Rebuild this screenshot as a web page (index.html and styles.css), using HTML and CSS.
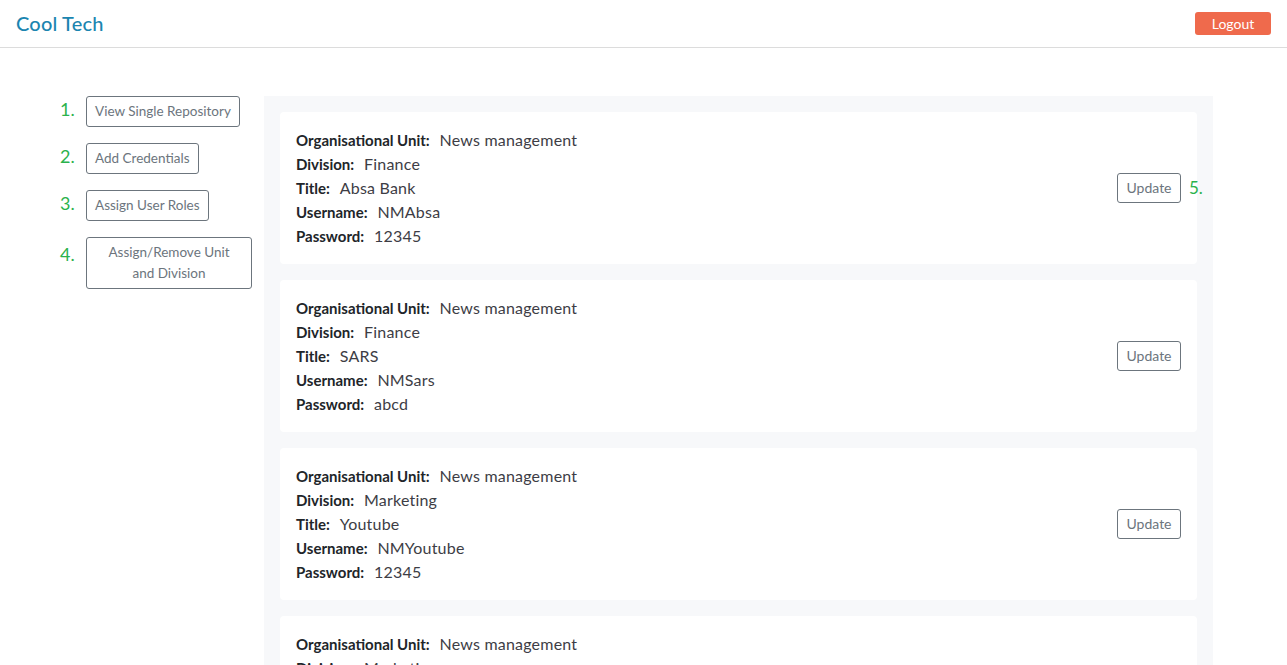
FILE: index.html
```html
<!DOCTYPE html>
<html>
<head>
<meta charset="utf-8">
<link rel="stylesheet" href="styles.css">
</head>
<body>
<header class="topbar">
  <div class="brand">Cool Tech</div>
  <button class="logout">Logout</button>
</header>
<main class="layout">
  <aside class="sidebar">
    <div class="step"><span class="num">1.</span><button class="outline">View Single Repository</button></div>
    <div class="step"><span class="num">2.</span><button class="outline">Add Credentials</button></div>
    <div class="step"><span class="num">3.</span><button class="outline">Assign User Roles</button></div>
    <div class="step step-tall"><span class="num">4.</span><button class="outline wide">Assign/Remove Unit<br>and Division</button></div>
  </aside>
  <section class="panel">
    <div class="card">
      <div class="fields">
        <div><b>Organisational Unit:</b> <span>News management</span></div>
        <div><b>Division:</b> <span>Finance</span></div>
        <div><b>Title:</b> <span>Absa Bank</span></div>
        <div><b>Username:</b> <span>NMAbsa</span></div>
        <div><b>Password:</b> <span>12345</span></div>
      </div>
      <button class="outline update">Update</button>
      <span class="num five">5.</span>
    </div>
    <div class="card">
      <div class="fields">
        <div><b>Organisational Unit:</b> <span>News management</span></div>
        <div><b>Division:</b> <span>Finance</span></div>
        <div><b>Title:</b> <span>SARS</span></div>
        <div><b>Username:</b> <span>NMSars</span></div>
        <div><b>Password:</b> <span>abcd</span></div>
      </div>
      <button class="outline update">Update</button>
    </div>
    <div class="card">
      <div class="fields">
        <div><b>Organisational Unit:</b> <span>News management</span></div>
        <div><b>Division:</b> <span>Marketing</span></div>
        <div><b>Title:</b> <span>Youtube</span></div>
        <div><b>Username:</b> <span>NMYoutube</span></div>
        <div><b>Password:</b> <span>12345</span></div>
      </div>
      <button class="outline update">Update</button>
    </div>
    <div class="card">
      <div class="fields">
        <div><b>Organisational Unit:</b> <span>News management</span></div>
        <div><b>Division:</b> <span>Marketing</span></div>
        <div><b>Title:</b> <span>Instagram</span></div>
        <div><b>Username:</b> <span>NMInsta</span></div>
        <div><b>Password:</b> <span>12345</span></div>
      </div>
      <button class="outline update">Update</button>
    </div>
  </section>
</main>
</body>
</html>
```
FILE: styles.css
```css
* { box-sizing: border-box; }
html, body { margin: 0; padding: 0; }
body {
  font-family: "Lato", "Liberation Sans", sans-serif;
  color: #212529;
  background: #fff;
  overflow: hidden;
  height: 665px;
}
.topbar {
  height: 48px;
  border-bottom: 1px solid #dcdcdc;
  display: flex;
  align-items: center;
  justify-content: space-between;
  padding: 0 16px;
}
.brand {
  color: #1b85b0;
  font-size: 20px;
  font-weight: 500;
  letter-spacing: 0.2px;
  margin-top: -2px;
}
.logout {
  background: #ef6a4c;
  color: #fff;
  border: none;
  border-radius: 3px;
  font-family: inherit;
  font-size: 14px;
  width: 76px;
  height: 23px;
  margin-top: -1px;
}
.layout {
  display: flex;
  align-items: flex-start;
  padding-top: 48px;
}
.sidebar {
  width: 264px;
  padding-left: 58px;
  display: flex;
  flex-direction: column;
  gap: 16px;
}
.step {
  display: flex;
  align-items: flex-start;
}
.num {
  color: #2bb24c;
  font-size: 18px;
  width: 28px;
  line-height: 26px;
  padding-left: 2px;
}
.step-tall .num { padding-top: 4px; }
.outline {
  background: #fff;
  border: 1px solid #6c757d;
  border-radius: 3px;
  color: #6c757d;
  font-family: inherit;
  font-size: 13.5px;
  padding: 0 8px;
  height: 31px;
  line-height: 29px;
}
.outline.wide {
  height: 52px;
  line-height: 21px;
  width: 166px;
  text-align: center;
}
.panel {
  width: 949px;
  background: #f7f8fa;
  padding: 16px;
  display: flex;
  flex-direction: column;
  gap: 16px;
}
.card {
  background: #fff;
  border-radius: 4px;
  padding: 16px;
  display: flex;
  align-items: center;
  justify-content: space-between;
  position: relative;
}
.fields {
  font-size: 15px;
  line-height: 24px;
  color: #333;
}
.fields b {
  color: #212529;
  font-weight: 700;
  margin-right: 6px;
}
.fields span {
  font-size: 16px;
  letter-spacing: 0.2px;
  color: #3d3d45;
}
.update {
  height: 30px;
  width: 64px;
  padding: 0;
  line-height: 28px;
  font-size: 14px;
}
.five {
  position: absolute;
  left: 100%;
  margin-left: -8px;
  top: 50%;
  transform: translateY(-50%);
  width: auto;
  padding: 0;
  font-size: 17px;
}
```
